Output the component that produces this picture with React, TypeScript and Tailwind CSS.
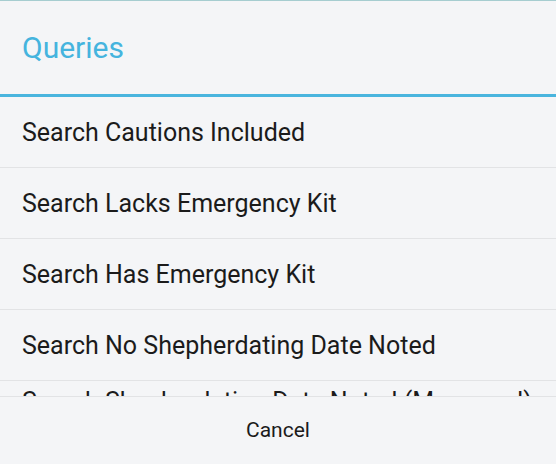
const queries = [
  'Search Cautions Included',
  'Search Lacks Emergency Kit',
  'Search Has Emergency Kit',
  'Search No Shepherdating Date Noted',
];

export default function App() {
  return (
    <div className="w-[556px] h-[464px] bg-[#f4f5f7] flex flex-col overflow-hidden font-['Roboto',sans-serif]">
      <div className="h-px bg-[#a6cdd0]" />
      <div className="h-[93px] flex items-center px-[22px]">
        <h1 className="text-[30px] text-[#45b4de] leading-none">Queries</h1>
      </div>
      <div className="h-[3px] bg-[#4ab5de]" />

      <div className="h-[299px] overflow-hidden flex flex-col">
        {queries.map((q) => (
          <div key={q} className="h-[71px] shrink-0 flex items-center px-[22px] border-b border-[#e2e3e5]">
            <span className="text-[25px] text-[#1b1b1b] leading-none">{q}</span>
          </div>
        ))}
        <div className="h-[71px] shrink-0 px-[22px] pt-[8px] whitespace-nowrap">
          <span className="text-[25px] text-[#1b1b1b] leading-none">
            Search Shepherdating Date Noted (Measured)
          </span>
        </div>
      </div>

      <div className="flex-1 border-t border-[#e2e3e5] flex items-center justify-center">
        <button className="text-[21px] text-[#1b1b1b] leading-none">Cancel</button>
      </div>
    </div>
  );
}
